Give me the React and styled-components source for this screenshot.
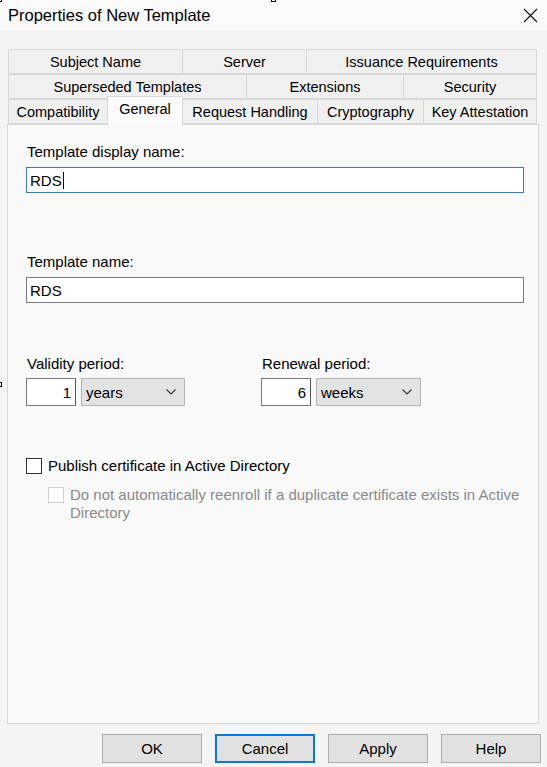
import styled, { createGlobalStyle } from "styled-components";

const Global = createGlobalStyle`
  html, body {
    margin: 0;
    padding: 0;
    background: #f4f4f4;
  }
  * { box-sizing: border-box; }
`;

const Dialog = styled.div`
  position: relative;
  width: 547px;
  height: 767px;
  display: flex;
  flex-direction: column;
  background: #f4f4f4;
  font-family: "Liberation Sans", Arial, sans-serif;
  font-size: 15px;
  color: #000;
  overflow: hidden;
`;

const TitleBar = styled.div`
  height: 30px;
  display: flex;
  align-items: center;
  justify-content: space-between;
  padding: 0 9px 0 8px;
  font-size: 16.5px;
  background: #fafafa;
`;

const Handle = styled.span`
  position: absolute;
  width: 5px;
  height: 5px;
  border: 1px solid #000;
  background: #fff;
`;

const Tabs = styled.div`
  margin: 19px 10px 0 8px;
  display: flex;
  flex-direction: column;
`;

const TabRow = styled.div`
  display: flex;
  height: 25px;
  align-items: flex-end;
`;

const Tab = styled.div`
  height: ${(p) => (p.$active ? "29px" : "25px")};
  margin-top: ${(p) => (p.$active ? "-4px" : "0")};
  margin-bottom: ${(p) => (p.$active ? "-1px" : "0")};
  display: flex;
  align-items: center;
  justify-content: center;
  border: 1px solid #d9d9d9;
  border-right: none;
  border-bottom: ${(p) => (p.$active ? "none" : "1px solid #d9d9d9")};
  background: ${(p) => (p.$active ? "#fbfbfb" : "#f0f0f0")};
  white-space: nowrap;
  font-size: 14.5px;
  position: relative;
  z-index: ${(p) => (p.$active ? 2 : 1)};
  padding-bottom: ${(p) => (p.$active ? "5px" : "0")};
  &:last-child {
    border-right: 1px solid #d9d9d9;
  }
`;

const Panel = styled.div`
  margin: 0 8px 0 7px;
  height: 600px;
  border: 1px solid #d9d9d9;
  background: #f9f9f9;
  padding: 18px 14px 0 18px;
  display: flex;
  flex-direction: column;
`;

const Label = styled.div`
  line-height: 18px;
  margin-top: ${(p) => p.$mt || 0}px;
  margin-left: 1px;
`;

const TextBox = styled.div`
  height: 26px;
  margin-top: 6px;
  background: #fff;
  border: 1px solid ${(p) => (p.$focused ? "#3d7fb5" : "#7a7a7a")};
  display: flex;
  align-items: center;
  padding-left: 3px;
`;

const Caret = styled.span`
  display: inline-block;
  width: 1px;
  height: 17px;
  background: #000;
  margin-left: 1px;
`;

const PeriodRow = styled.div`
  display: flex;
  margin-top: 5px;
`;

const PeriodGroup = styled.div`
  display: flex;
  flex-direction: column;
  width: ${(p) => p.$w}px;
`;

const Controls = styled.div`
  display: flex;
  gap: 5px;
  margin-top: 5px;
`;

const NumberBox = styled.div`
  width: 50px;
  height: 28px;
  background: #fff;
  border: 1px solid #7a7a7a;
  border-right-color: #555;
  display: flex;
  align-items: center;
  justify-content: flex-end;
  padding-right: 4px;
`;

const Select = styled.div`
  width: ${(p) => p.$w}px;
  height: 28px;
  background: #e3e3e3;
  border: 1px solid #b4b4b4;
  display: flex;
  align-items: center;
  justify-content: space-between;
  padding: 0 7px 0 4px;
`;

const CheckRow = styled.div`
  display: flex;
  align-items: flex-start;
  gap: 6px;
  margin-top: ${(p) => p.$mt}px;
  margin-left: ${(p) => p.$ml || 0}px;
  line-height: 18px;
  color: ${(p) => (p.$disabled ? "#8a8a8a" : "#000")};
`;

const Box = styled.span`
  flex: none;
  width: 16px;
  height: 16px;
  margin-top: 1px;
  background: #fff;
  border: 1px solid ${(p) => (p.$disabled ? "#cfcfcf" : "#333")};
`;

const Buttons = styled.div`
  display: flex;
  gap: 13px;
  padding: 10px 0 0 102px;
`;

const Button = styled.div`
  width: ${(p) => p.$w || 100}px;
  height: 29px;
  display: flex;
  align-items: center;
  justify-content: center;
  background: #e1e1e1;
  border: ${(p) => (p.$focused ? "2px solid #0a78d4" : "1px solid #adadad")};
`;

const tabRows = [
  [
    { label: "Subject Name", w: 174 },
    { label: "Server", w: 124 },
    { label: "Issuance Requirements", w: 231 },
  ],
  [
    { label: "Superseded Templates", w: 238 },
    { label: "Extensions", w: 157 },
    { label: "Security", w: 134 },
  ],
  [
    { label: "Compatibility", w: 99 },
    { label: "General", w: 75, active: true },
    { label: "Request Handling", w: 135 },
    { label: "Cryptography", w: 106 },
    { label: "Key Attestation", w: 114 },
  ],
];

const Chevron = () => (
  <svg width="12" height="8" viewBox="0 0 12 8">
    <path d="M1.5 1.5 L6 6 L10.5 1.5" fill="none" stroke="#333" strokeWidth="1.1" />
  </svg>
);

const CloseIcon = () => (
  <svg width="15" height="15" viewBox="0 0 15 15">
    <path d="M1 1 L14 14 M14 1 L1 14" stroke="#111" strokeWidth="1.1" />
  </svg>
);

const App = () => {
  return (
    <>
      <Global />
      <Dialog>
        <Handle style={{ left: -3, top: -3 }} />
        <Handle style={{ left: 271, top: -3 }} />
        <Handle style={{ left: -3, top: 382 }} />
        <TitleBar>
          <span>Properties of New Template</span>
          <CloseIcon />
        </TitleBar>
        <Tabs>
          {tabRows.map((row, i) => (
            <TabRow key={i}>
              {row.map((t) => (
                <Tab key={t.label} $active={t.active} style={{ width: t.w }}>
                  {t.label}
                </Tab>
              ))}
            </TabRow>
          ))}
        </Tabs>
        <Panel>
          <Label>Template display name:</Label>
          <TextBox $focused>
            RDS<Caret />
          </TextBox>
          <Label $mt={60}>Template name:</Label>
          <TextBox>RDS</TextBox>
          <PeriodRow>
            <PeriodGroup $w={235}>
              <Label $mt={47}>Validity period:</Label>
              <Controls>
                <NumberBox>1</NumberBox>
                <Select $w={104}>
                  <span>years</span>
                  <Chevron />
                </Select>
              </Controls>
            </PeriodGroup>
            <PeriodGroup $w={200}>
              <Label $mt={47}>Renewal period:</Label>
              <Controls>
                <NumberBox>6</NumberBox>
                <Select $w={105}>
                  <span>weeks</span>
                  <Chevron />
                </Select>
              </Controls>
            </PeriodGroup>
          </PeriodRow>
          <CheckRow $mt={51}>
            <Box />
            <span>Publish certificate in Active Directory</span>
          </CheckRow>
          <CheckRow $mt={11} $ml={22} $disabled>
            <Box $disabled />
            <span>
              Do not automatically reenroll if a duplicate certificate exists in Active
              <br />
              Directory
            </span>
          </CheckRow>
        </Panel>
        <Buttons>
          <Button>OK</Button>
          <Button $focused>Cancel</Button>
          <Button>Apply</Button>
          <Button>Help</Button>
        </Buttons>
      </Dialog>
    </>
  );
};

export default App;
